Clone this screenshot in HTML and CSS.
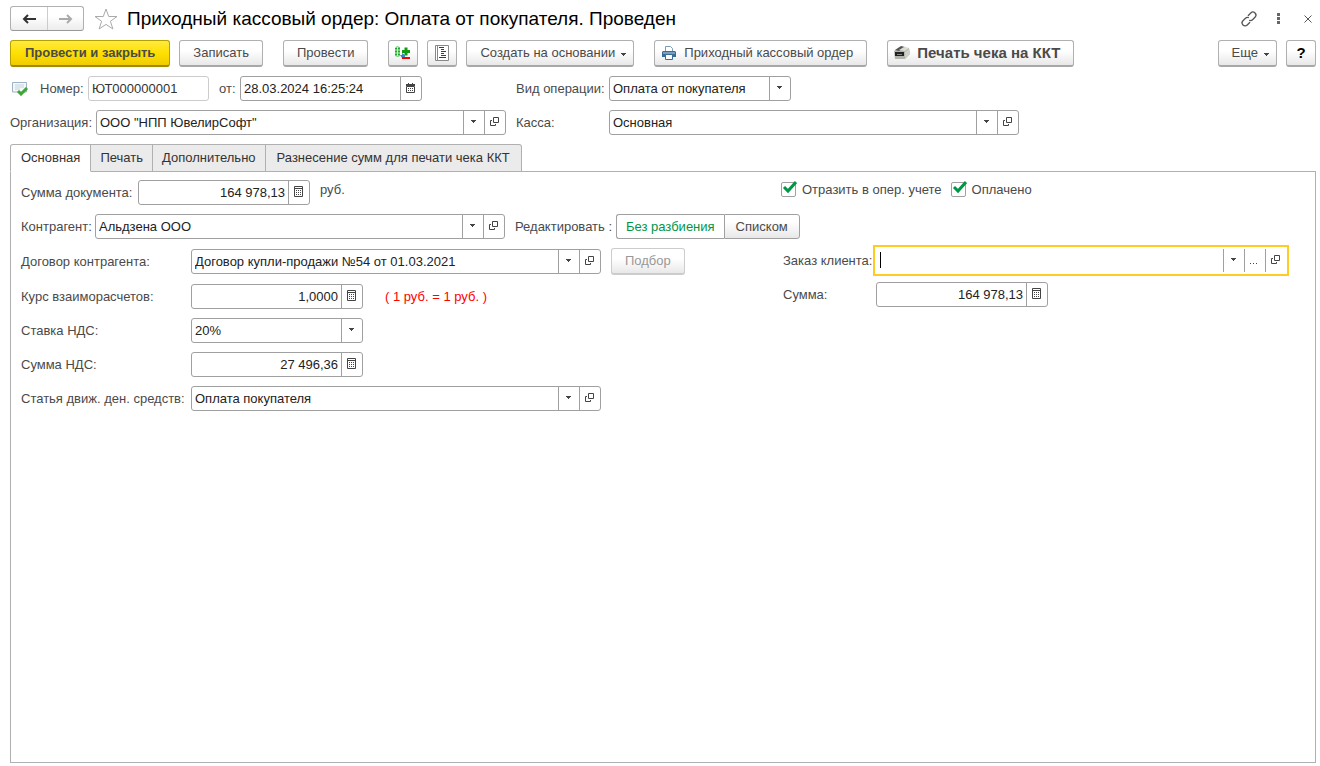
FILE: index.html
```html
<!DOCTYPE html>
<html lang="ru">
<head>
<meta charset="utf-8">
<title>Приходный кассовый ордер</title>
<link rel="stylesheet" href="styles.css">
</head>
<body>
<svg class="sprite" aria-hidden="true">
  <symbol id="caret" viewBox="0 0 5 3"><path d="M0 0h5v1h-1v1h-1v1h-1v-1h-1v-1h-1z" fill="#444"/></symbol>
  <symbol id="open" viewBox="0 0 9 9"><path d="M3.500 .5h5v5h-5zM2 3.500H.5v5h5V7" fill="none" stroke="#444"/></symbol>
  <symbol id="calc" viewBox="0 0 9 11"><path d="M.5.5h8v10h-8zM1 2.500h7" fill="none" stroke="#444"/><path d="M2 4h1v1h-1zM4 4h1v1h-1zM6 4h1v1h-1zM2 6h1v1h-1zM4 6h1v1h-1zM6 6h1v1h-1zM2 8h1v1h-1zM4 8h1v1h-1zM6 8h1v1h-1z" fill="#444"/></symbol>
  <symbol id="calendar" viewBox="0 0 9 10"><path d="M2 0h1v1h3V0h1v1h2v2H0V1h2z" fill="#444"/><path d="M.5 3.500h8v6h-8z" fill="none" stroke="#444"/><path d="M2 5h1v1h-1zM4 5h1v1h-1zM6 5h1v1h-1zM2 7h1v1h-1zM4 7h1v1h-1zM6 7h1v1h-1z" fill="#444"/></symbol>
</svg>

<header class="titlebar">
  <div class="nav">
    <button class="nav-btn" type="button" aria-label="Назад"><svg width="14" height="10" viewBox="0 0 14 10"><path d="M14 5H3M6 1L2 5l4 4" fill="none" stroke="#333" stroke-width="2"/></svg></button>
    <button class="nav-btn" type="button" aria-label="Вперед"><svg width="14" height="10" viewBox="0 0 14 10"><path d="M0 5h11M8 1l4 4-4 4" fill="none" stroke="#aaa" stroke-width="2"/></svg></button>
  </div>
  <button class="icon-btn star" type="button" aria-label="В избранное"><svg width="24" height="22" viewBox="0 0 24 22"><path d="M12 1l2.700 7.500H23l-6.600 4.800 2.500 7.700L12 16.400 5.100 21l2.500-7.700L1 8.500h8.300z" fill="#fff" stroke="#aaa"/></svg></button>
  <h1 class="title">Приходный кассовый ордер: Оплата от покупателя. Проведен</h1>
  <div class="window-tools">
    <button class="icon-btn" type="button" aria-label="Ссылка"><svg width="16" height="16" viewBox="0 0 16 16"><g transform="rotate(-45 8 8)" fill="none" stroke="#555" stroke-width="1.300" stroke-linecap="round"><path d="M6 11H2.500a3 3 0 0 1 0-6H6a3 3 0 0 1 2.600 1.500"/><path d="M10 5h3.500a3 3 0 0 1 0 6H10a3 3 0 0 1-2.600-1.500"/></g></svg></button>
    <button class="icon-btn" type="button" aria-label="Меню"><svg width="3" height="11" viewBox="0 0 3 11"><path d="M0 0h3v3H0zM0 4h3v3H0zM0 8h3v3H0z" fill="#666"/></svg></button>
    <button class="icon-btn close" type="button" aria-label="Закрыть"><svg width="8" height="8" viewBox="0 0 8 8"><path d="M.5.5l7 7M7.500.5l-7 7" stroke="#555"/></svg></button>
  </div>
</header>

<div class="toolbar">
  <button class="btn btn-primary" type="button">Провести и закрыть</button>
  <button class="btn gap-after" type="button">Записать</button>
  <button class="btn gap-after" type="button">Провести</button>
  <button class="btn btn-square" type="button" aria-label="Движения документа"><svg width="18" height="16" viewBox="0 0 18 16"><path d="M1 3l2-2 3 1v9l-2 1-3-1z" fill="#6fd06f"/><path d="M1 3.500h5M1 6.500h5M1 9.500h5" stroke="#1fa82f"/><path d="M3.500 2v9" stroke="#d8f5d8"/><path d="M8 6.500h8M12 2.500v8" stroke="#129a12" stroke-width="3"/><path d="M6 10h2V8l3 2v3H8z" fill="#3a86c8"/><path d="M8 13h8" stroke="#f00" stroke-width="2"/></svg></button>
  <button class="btn btn-square" type="button" aria-label="Журнал"><svg width="16" height="16" viewBox="0 0 16 16"><path d="M1.500.5h13v15h-13zM3.500.5v15" fill="#fff" stroke="#888"/><path d="M5 2.500h5M7 4.500h3M7 6.500h5M7 8.500h3M7 10.500h5M5 12.500h7" stroke="#174a68"/></svg></button>
  <button class="btn gap-after btn-menu" type="button">Создать на основании<svg width="5" height="3"><use href="#caret"/></svg></button>
  <button class="btn btn-icon gap-after" type="button"><svg width="14" height="14" viewBox="0 0 14 14"><path d="M3.500 6V.5h5l2 2V6" fill="#fff" stroke="#7d9bb5"/><path d="M1 5h12l1 1v5H0V6z" fill="#3b6c98"/><path d="M1 7h12" stroke="#b9d0e4"/><path d="M3.500 8.500h7v5h-7z" fill="#fff" stroke="#3b6c98"/></svg>Приходный кассовый ордер</button>
  <button class="btn btn-icon btn-bold" type="button"><svg width="16" height="14" viewBox="0 0 16 14"><path d="M0 5l6-4 9 1 1 6-5 5H1z" fill="#b4b4aa"/><path d="M1 4l6-4 4 1-6 4z" fill="#555"/><path d="M5 4l5-3 5 1-4 3z" fill="#dcdcd4"/><path d="M1 6h9v4H1z" fill="#222"/><path d="M3 8h5v1H3z" fill="#888"/><path d="M11 6l4-3 1 5-5 4z" fill="#d0d0c6"/></svg>Печать чека на ККТ</button>
  <button class="btn more btn-menu" type="button">Еще<svg width="5" height="3"><use href="#caret"/></svg></button>
  <button class="btn btn-square help" type="button">?</button>
</div>

<main class="form">
  <div class="head">
    <div class="cell">
      <svg class="status" width="16" height="14" viewBox="0 0 16 14"><path d="M.5.500h14v9.500h-14z" fill="#f4f8fb" stroke="#9db4c6"/><path d="M3 3h9M3 5h9M3 7h5" stroke="#c5d2dc"/><path d="M6 9l3 3 6-6" fill="none" stroke="#3fa535" stroke-width="3"/></svg>
      <label class="label l-num" for="num">Номер:</label>
      <input class="plain num" id="num" value="ЮТ000000001" readonly>
      <label class="label l-from" for="date">от:</label>
      <div class="field w-s"><input id="date" value="28.03.2024 16:25:24"><button type="button" aria-label="Календарь"><svg width="9" height="10"><use href="#calendar"/></svg></button></div>
    </div>
    <div class="cell">
      <label class="label l-op" for="op">Вид операции:</label>
      <div class="field w-s"><select id="op"><option>Оплата от покупателя</option></select><span class="mark"><svg width="5" height="3"><use href="#caret"/></svg></span></div>
    </div>
    <div class="cell">
      <label class="label l-org" for="org">Организация:</label>
      <div class="field w-l"><input id="org" value="ООО &quot;НПП ЮвелирСофт&quot;"><button type="button" aria-label="Выбрать"><svg width="5" height="3"><use href="#caret"/></svg></button><button type="button" aria-label="Открыть"><svg width="9" height="9"><use href="#open"/></svg></button></div>
    </div>
    <div class="cell">
      <label class="label l-op" for="kassa">Касса:</label>
      <div class="field w-l"><input id="kassa" value="Основная"><button type="button" aria-label="Выбрать"><svg width="5" height="3"><use href="#caret"/></svg></button><button type="button" aria-label="Открыть"><svg width="9" height="9"><use href="#open"/></svg></button></div>
    </div>
  </div>

  <div class="tabs" role="tablist">
    <button class="tab active" role="tab" aria-selected="true" type="button">Основная</button>
    <button class="tab" role="tab" type="button">Печать</button>
    <button class="tab" role="tab" type="button">Дополнительно</button>
    <button class="tab" role="tab" type="button">Разнесение сумм для печати чека ККТ</button>
  </div>

  <section class="panel">
    <div class="col">
      <div class="cell">
        <label class="label l-sum" for="sum">Сумма документа:</label>
        <div class="field w-s"><input class="right" id="sum" value="164 978,13"><button type="button" aria-label="Калькулятор"><svg width="9" height="11"><use href="#calc"/></svg></button></div>
        <span class="unit">руб.</span>
      </div>
      <div class="cell">
        <label class="label l-agent" for="agent">Контрагент:</label>
        <div class="field w-l"><input id="agent" value="Альдзена ООО"><button type="button" aria-label="Выбрать"><svg width="5" height="3"><use href="#caret"/></svg></button><button type="button" aria-label="Открыть"><svg width="9" height="9"><use href="#open"/></svg></button></div>
        <span class="label l-edit">Редактировать :</span>
        <div class="segment"><button class="seg on" type="button">Без разбиения</button><button class="seg" type="button">Списком</button></div>
      </div>
      <div class="cell">
        <label class="label l-wide" for="contract">Договор контрагента:</label>
        <div class="field w-l"><input id="contract" value="Договор купли-продажи №54 от 01.03.2021"><button type="button" aria-label="Выбрать"><svg width="5" height="3"><use href="#caret"/></svg></button><button type="button" aria-label="Открыть"><svg width="9" height="9"><use href="#open"/></svg></button></div>
        <button class="btn pick" type="button" disabled>Подбор</button>
      </div>
      <div class="cell">
        <label class="label l-wide" for="rate">Курс взаиморасчетов:</label>
        <div class="field w-s"><input class="right" id="rate" value="1,0000"><button type="button" aria-label="Калькулятор"><svg width="9" height="11"><use href="#calc"/></svg></button></div>
        <span class="note">( 1 руб. = 1 руб. )</span>
      </div>
      <div class="cell">
        <label class="label l-wide" for="vat">Ставка НДС:</label>
        <div class="field w-s"><select id="vat"><option>20%</option></select><span class="mark"><svg width="5" height="3"><use href="#caret"/></svg></span></div>
      </div>
      <div class="cell">
        <label class="label l-wide" for="vatsum">Сумма НДС:</label>
        <div class="field w-s"><input class="right" id="vatsum" value="27 496,36"><button type="button" aria-label="Калькулятор"><svg width="9" height="11"><use href="#calc"/></svg></button></div>
      </div>
      <div class="cell">
        <label class="label l-wide" for="item">Статья движ. ден. средств:</label>
        <div class="field w-l"><input id="item" value="Оплата покупателя"><button type="button" aria-label="Выбрать"><svg width="5" height="3"><use href="#caret"/></svg></button><button type="button" aria-label="Открыть"><svg width="9" height="9"><use href="#open"/></svg></button></div>
      </div>
    </div>
    <div class="side">
      <div class="checks">
        <label class="check"><input type="checkbox" checked><svg width="16" height="16" viewBox="0 0 16 16"><path d="M3 7l4 4 8-9" fill="none" stroke="#009646" stroke-width="3"/></svg>Отразить в опер. учете</label>
        <label class="check"><input type="checkbox" checked><svg width="16" height="16" viewBox="0 0 16 16"><path d="M3 7l4 4 8-9" fill="none" stroke="#009646" stroke-width="3"/></svg>Оплачено</label>
      </div>
      <div class="cell">
        <label class="label l-order" for="order">Заказ клиента:</label>
        <div class="field focus"><span class="cursor"></span><input id="order" value="" autofocus><button type="button" aria-label="Выбрать"><svg width="5" height="3"><use href="#caret"/></svg></button><button type="button" aria-label="Подбор"><svg width="8" height="9" viewBox="0 0 8 9"><path d="M0 8h1v1H0zM3 8h1v1H3zM6 8h1v1H6z" fill="#444"/></svg></button><button type="button" aria-label="Открыть"><svg width="9" height="9"><use href="#open"/></svg></button></div>
      </div>
      <div class="cell">
        <label class="label l-amount" for="amount">Сумма:</label>
        <div class="field w-s"><input class="right" id="amount" value="164 978,13"><button type="button" aria-label="Калькулятор"><svg width="9" height="11"><use href="#calc"/></svg></button></div>
      </div>
    </div>
  </section>
</main>
</body>
</html>
```
FILE: styles.css
```css
* { box-sizing: border-box; }
body {
  margin: 0;
  min-height: 100vh;
  padding: 6px 4px 3px 10px;
  display: flex;
  flex-direction: column;
  background: #fff;
  color: #4a4a4a;
  font: 13px/16px "Liberation Sans", Arial, sans-serif;
}
button, input, select { font: inherit; color: inherit; }
button { cursor: pointer; }
svg { display: block; flex: none; }
.sprite { position: absolute; width: 0; height: 0; }

.titlebar { display: flex; align-items: center; height: 25px; }
.nav { display: flex; height: 25px; border: 1px solid #b0b0b0; border-bottom-color: #999; border-radius: 3px; background: linear-gradient(#fff 40%, #ececec); }
.nav-btn { width: 36px; padding: 0; border: 0; background: none; display: flex; align-items: center; justify-content: center; }
.nav-btn + .nav-btn { border-left: 1px solid #ccc; }
.icon-btn { padding: 0; border: 0; background: none; }
.star { margin-left: 10px; }
.title { margin: 0 0 0 9px; color: #000; font-size: 19px; line-height: 24px; font-weight: 400; white-space: nowrap; }
.window-tools { margin-left: auto; padding-right: 4px; display: flex; align-items: center; gap: 20px; }
.icon-btn svg { overflow: visible; }
.close { margin-left: 4px; }

.toolbar { display: flex; gap: 9px; margin-top: 9px; }
.btn {
  height: 27px;
  padding: 0 13px;
  display: flex;
  align-items: center;
  justify-content: center;
  border: 1px solid #b0b0b0;
  border-bottom: 2px solid #a8a8a8;
  border-radius: 3px;
  background: linear-gradient(#fff 40%, #e8e8e8);
  white-space: nowrap;
}
.btn-primary { padding: 0 14px; border-color: #b5a000 #b5a000 #a08a00; background: linear-gradient(#ffea40, #ffe000 50%, #f0cc00); font-weight: 700; }
.gap-after { margin-right: 11px; }
.btn-square { width: 30px; padding: 0; }
.btn-icon { padding: 0 13px 0 7px; gap: 8px; }
.btn-bold { padding-left: 6px; gap: 7px; font-size: 15px; font-weight: 700; }
.btn-menu { gap: 6px; padding-right: 7px; }
.btn-menu svg { margin-top: 3px; }
.more { margin-left: auto; }
.help { color: #000; font-size: 15px; font-weight: 700; }

.form { flex: 1; display: flex; flex-direction: column; }
.head { margin-top: 9px; display: grid; grid-template-columns: 506px 1fr; row-gap: 9px; }
.cell { display: flex; align-items: center; }
.cell > * { flex: none; }
.label { white-space: nowrap; }
.status { margin: 0 12px 0 2px; }
.plain { height: 25px; border: 1px solid #ccc; border-radius: 3px; padding: 0 3px; background: #fff; color: #333; }
.num { width: 121px; margin-right: 10px; }
.field { display: flex; height: 25px; border: 1px solid #a0a0a0; border-radius: 3px; background: #fff; color: #222; }
.field input, .field select { flex: 1; min-width: 0; width: 0; padding: 0 3px; border: 0; outline: 0; background: none; appearance: none; }
.field .right { text-align: right; }
.field button, .mark { width: 21px; padding: 0 2px 2px 0; border: 0; border-left: 1px solid #a0a0a0; background: none; display: flex; align-items: center; justify-content: center; }
.w-s { width: 182px; }
.panel .w-s { width: 172px; }
.w-l { width: 410px; }
.l-num { width: 48px; }
.l-from { width: 21px; }
.l-op { width: 93px; }
.l-org { width: 86px; }
.l-sum { width: 117px; }
.l-agent { width: 74px; }
.l-edit { width: 101px; margin-left: 10px; }
.l-wide { width: 170px; }
.l-order { width: 92px; padding-left: 2px; }
.l-amount { width: 95px; padding-left: 2px; }

.tabs { display: flex; margin: 9px 0 -1px; z-index: 1; }
.tab { height: 28px; padding: 0 9px; border: 1px solid #b0b0b0; border-left-width: 0; background: #ebebeb; color: #333; white-space: nowrap; }
.tab:first-child { padding: 0 10px; border-left-width: 1px; border-top-left-radius: 3px; }
.tab:last-child { padding: 0 11px; border-top-right-radius: 3px; }
.tab.active { background: #fff; border-bottom-color: #fff; }

.panel { flex: 1; display: grid; grid-template-columns: 760px 1fr; align-items: start; padding: 8px 26px 8px 10px; border: 1px solid #b0b0b0; }
.col { display: flex; flex-direction: column; gap: 9px; }
.unit { margin: 0 0 5px 10px; }
.note { margin-left: 22px; color: #f00; }
.pick { margin-left: 10px; color: #999; border-color: #ccc; }
.segment { display: flex; height: 25px; }
.seg { padding: 0 11px; border: 1px solid #a0a0a0; background: linear-gradient(#fff 30%, #e8e8e8); white-space: nowrap; border-radius: 0 3px 3px 0; }
.seg.on { border-right: 0; border-radius: 3px 0 0 3px; background: #fff; color: #009646; padding: 0 9px; }
.checks { display: flex; gap: 9px; height: 19px; margin-bottom: 46px; }
.check { position: relative; display: flex; align-items: center; gap: 6px; white-space: nowrap; }
.check input { appearance: none; width: 15px; height: 15px; margin: 0; border: 1px solid #a0a0a0; border-radius: 2px; background: #fff; }
.check svg { position: absolute; left: 0; top: 0; }
.side .cell + .cell { margin-top: 6px; }
.side .focus { flex: 1; height: 31px; padding: 2px 1px 2px 2px; border: 2px solid #fc2; border-radius: 0; color: #000; }
.cursor { width: 1px; height: 16px; margin: 3px 0 0 3px; background: #000; }
.focus input { caret-color: transparent; }
```
